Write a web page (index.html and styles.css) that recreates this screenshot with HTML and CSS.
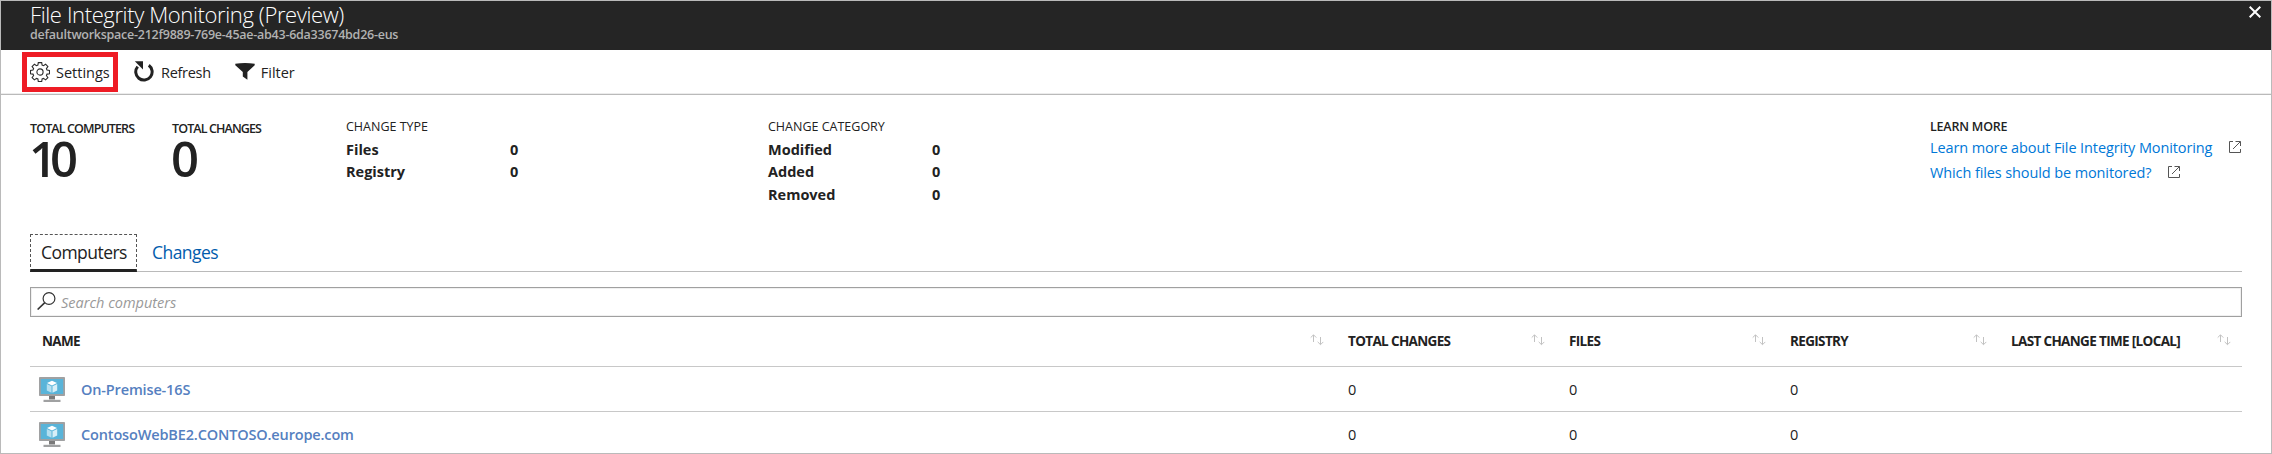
FILE: index.html
```html
<!DOCTYPE html>
<html lang="en">
<head>
<meta charset="utf-8">
<title>File Integrity Monitoring</title>
<link rel="stylesheet" href="styles.css">
</head>
<body>
<svg class="defs" width="0" height="0" aria-hidden="true">
  <symbol id="pc" viewBox="0 0 26 25">
    <rect width="26" height="19" rx=".8" fill="#a0a1a2"/>
    <rect x="1.800" y="2" width="22.400" height="15" fill="#59b4d9"/>
    <path d="M10 19h6v3.500h-6z" fill="#7a7a7a"/>
    <path d="M4.500 22.800h17V25h-17z" fill="#a0a1a2"/>
    <path d="M13 3.700l5 2.300-5 2.400L8 6z" fill="#fff"/>
    <path d="M7.800 7l4.700 2.200v6.600L7.800 13.400z" fill="#b5dff0"/>
    <path d="M18.200 7l-4.700 2.200v6.600l4.700-2.400z" fill="#d8eff8"/>
  </symbol>
  <symbol id="sort" viewBox="0 0 14 12">
    <path d="M3.500 8V1M.7 3.600L3.500.8l2.800 2.800M10.500 3v7.500M7.700 7.900l2.800 2.800 2.800-2.800" fill="none" stroke="#c2c2c2"/>
  </symbol>
  <symbol id="ext" viewBox="0 0 12 12">
    <path d="M4 .5H.5v11h11V8M6.500.5h5V5M11.300.7L4 8" fill="none" stroke="#555"/>
  </symbol>
</svg>
<div class="blade">
  <header class="head">
    <div>
      <h1 class="title">File Integrity Monitoring (Preview)</h1>
      <p class="subtitle">defaultworkspace-212f9889-769e-45ae-ab43-6da33674bd26-eus</p>
    </div>
    <svg class="close" width="12" height="12" viewBox="0 0 12 12"><path d="M.7.7l10.600 10.600M11.300.7L.7 11.300" stroke="#fff" stroke-width="2"/></svg>
  </header>

  <nav class="toolbar">
    <span class="cmd settings">
      <svg width="20" height="20" viewBox="0 0 20 20" fill="none" stroke="#2b2b2b" stroke-width="1.100">
        <path d="M8.300.6h3.400l.4 2.500 1.400.6 2.100-1.500 2.300 2.300-1.500 2.100.6 1.400 2.500.4v3.300l-2.500.4-.6 1.400 1.500 2.100-2.300 2.300-2.100-1.500-1.400.6-.4 2.500H8.300l-.4-2.500-1.400-.6-2.100 1.500-2.300-2.300 1.500-2.100-.6-1.400-2.500-.4V8.400L3 8l.6-1.400-1.500-2.100 2.300-2.300 2.100 1.500 1.400-.6z"/>
        <circle cx="10" cy="10" r="3.100"/>
      </svg>Settings</span>
    <span class="cmd refresh">
      <svg width="20" height="21" viewBox="0 0 20 21">
        <path d="M14.800 4.300A8.200 8.200 0 1 1 3.700 5.600" fill="none" stroke="#222" stroke-width="3"/>
        <path d="M.8.300H9v8.200z" fill="#222"/>
      </svg>Refresh</span>
    <span class="cmd filter">
      <svg width="20" height="17" viewBox="0 0 20 17"><path d="M.3.800Q10-.6 19.700.8v1.500L12.400 9v7.700L7.800 13.600V9L.3 2.300z" fill="#222"/></svg>Filter</span>
  </nav>

  <section class="stats">
    <div class="total"><p class="label">TOTAL COMPUTERS</p><p class="num">10</p></div>
    <div class="total"><p class="label">TOTAL CHANGES</p><p class="num">0</p></div>
    <div>
      <p class="label thin">CHANGE TYPE</p>
      <div class="kv"><span>Files</span><span>0</span><span>Registry</span><span>0</span></div>
    </div>
    <div>
      <p class="label thin">CHANGE CATEGORY</p>
      <div class="kv"><span>Modified</span><span>0</span><span>Added</span><span>0</span><span>Removed</span><span>0</span></div>
    </div>
    <div>
      <p class="label learn">LEARN MORE</p>
      <a class="link">Learn more about File Integrity Monitoring<svg width="12" height="12"><use href="#ext"/></svg></a>
      <a class="link">Which files should be monitored?<svg width="12" height="12"><use href="#ext"/></svg></a>
    </div>
  </section>

  <div class="tabs"><span class="tab active">Computers</span><span class="tab">Changes</span></div>

  <div class="search">
    <svg width="19" height="18" viewBox="0 0 19 18" fill="none" stroke="#333" stroke-width="1.200"><circle cx="12" cy="6.500" r="5.900"/><path d="M7.800 10.600L.6 17.500" stroke-width="1.600"/></svg>
    Search computers</div>

  <div class="row header">
    <span class="cell">NAME<svg width="14" height="12"><use href="#sort"/></svg></span>
    <span class="cell">TOTAL CHANGES<svg width="14" height="12"><use href="#sort"/></svg></span>
    <span class="cell">FILES<svg width="14" height="12"><use href="#sort"/></svg></span>
    <span class="cell">REGISTRY<svg width="14" height="12"><use href="#sort"/></svg></span>
    <span class="cell">LAST CHANGE TIME [LOCAL]<svg width="14" height="12"><use href="#sort"/></svg></span>
  </div>
  <div class="row">
    <span class="name"><svg width="26" height="25"><use href="#pc"/></svg>On-Premise-16S</span>
    <span>0</span><span>0</span><span>0</span>
  </div>
  <div class="row">
    <span class="name"><svg width="26" height="25"><use href="#pc"/></svg>ContosoWebBE2.CONTOSO.europe.com</span>
    <span>0</span><span>0</span><span>0</span>
  </div>
</div>
</body>
</html>
```
FILE: styles.css
```css
* { box-sizing: border-box; margin: 0; }
body {
  font-family: "Open Sans", "Noto Sans", sans-serif;
  font-size: 14.5px;
  color: #222;
  background: #fff;
}
svg { display: block; flex: none; }
.defs { position: absolute; }
.blade {
  width: 2272px;
  height: 454px;
  border: 1px solid #bababa;
  overflow: hidden;
}

.head {
  height: 49px;
  padding: 0 9px 0 29px;
  background: #252525;
  display: flex;
  justify-content: space-between;
}
.title {
  font-size: 22px;
  font-weight: 300;
  line-height: 26px;
  letter-spacing: -.38px;
  color: #fff;
}
.subtitle {
  font-size: 12.5px;
  font-weight: 600;
  line-height: 16px;
  letter-spacing: -.25px;
  color: #b2b2b2;
}
.close { margin: 5px 1px 0 0; }

.toolbar {
  height: 45px;
  border-bottom: 1px solid #bababa;
  box-shadow: inset 0 -1px #ececec;
  display: flex;
  align-items: flex-start;
}
.cmd {
  display: flex;
  align-items: center;
  height: 40px;
  margin-top: 2px;
}
.settings {
  width: 96px;
  margin-left: 21px;
  padding-left: 3px;
  border: 5px solid #ee1c25;
  gap: 6px;
}
.settings svg { margin-top: -1px; }
.refresh { margin-left: 16px; gap: 7px; letter-spacing: -.3px; }
.refresh svg { margin-top: -1px; }
.filter { margin-left: 24px; gap: 6px; }
.filter svg { margin-top: -2px; }

.stats {
  height: 139px;
  padding: 23px 0 0 29px;
  display: grid;
  grid-template-columns: 142px 174px 422px 1162px 1fr;
}
.total { padding-top: 2px; }
.label {
  font-size: 12.5px;
  font-weight: 600;
  line-height: 18px;
}
.total .label { letter-spacing: -.88px; }
.label.thin { font-weight: 400; }
.label.learn { letter-spacing: -.2px; }
.num {
  font-size: 49px;
  font-weight: 600;
  line-height: 40px;
  letter-spacing: -7px;
  margin-left: -1px;
}
.kv {
  margin-top: 3px;
  display: grid;
  grid-template-columns: 164px 20px;
  font-weight: 700;
  line-height: 22.4px;
}
.link {
  display: flex;
  gap: 17px;
  line-height: 24.5px;
  letter-spacing: -.11px;
  color: #0078d7;
}
.link svg { margin-top: 5px; }

.tabs {
  height: 38px;
  margin: 0 29px;
  border-bottom: 1px solid #bababa;
  display: flex;
  font-size: 17.5px;
  line-height: 36px;
  letter-spacing: -.55px;
}
.tab { color: #015cad; padding-left: 15px; }
.tab.active {
  width: 107px;
  height: 38px;
  padding-left: 10px;
  border: 1px dashed #555;
  border-bottom: 3px solid #222;
  color: #222;
  line-height: 34px;
}

.search {
  height: 30px;
  margin: 15px 29px 0;
  padding-left: 6px;
  border: 1px solid #a0a0a0;
  box-shadow: inset 0 0 0 1px #f0f0f0;
  display: flex;
  gap: 5px;
  align-items: center;
  font-style: italic;
  color: #999;
}
.search svg { margin-top: -3px; }

.row {
  height: 45px;
  margin: 0 29px;
  border-bottom: 1px solid #c8c8c8;
  display: grid;
  grid-template-columns: 1318px 221px 221px 221px 1fr;
  align-items: center;
}
.row:last-child { border: 0; }
.header {
  height: 50px;
  padding-bottom: 2px;
  font-size: 13.5px;
  font-weight: 700;
  letter-spacing: -.65px;
}
.cell {
  display: flex;
  justify-content: space-between;
  padding-right: 24px;
}
.cell:last-child { padding-right: 11px; }
.cell:first-child { padding-left: 12px; }
.cell svg { margin-top: 2px; }
.name {
  display: flex;
  align-items: center;
  gap: 16px;
  padding-left: 9px;
  font-weight: 600;
  letter-spacing: -.15px;
  color: #5580c0;
}
```
